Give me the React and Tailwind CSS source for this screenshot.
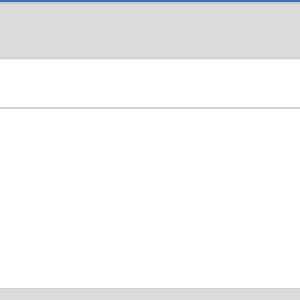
import React from "react";

const App = () => {
  return (
    <div className="w-[300px] h-[300px] flex flex-col bg-white overflow-hidden" style={{ fontFamily: "'Liberation Sans', sans-serif" }}>
      {/* top accent + header */}
      <div className="h-[2px] bg-[#3a6fd0]" />
      <div className="h-[2px] bg-[#c9c9c9]" />
      <div className="h-[53px] bg-[#dcdcdc]" />
      <div className="h-[2px] bg-[#d2d2d2]" />
      <div className="h-[1px] bg-[#f4f4f4]" />

      {/* top panel */}
      <div className="h-[47px] bg-white" />
      <div className="h-[2px] bg-[#d3d3d3]" />

      {/* main panel */}
      <div className="flex-1 bg-white" />

      {/* footer */}
      <div className="h-[1px] bg-[#d0d0d0]" />
      <div className="h-[11px] bg-[#dcdcdc]" />
    </div>
  );
};

export default App;
